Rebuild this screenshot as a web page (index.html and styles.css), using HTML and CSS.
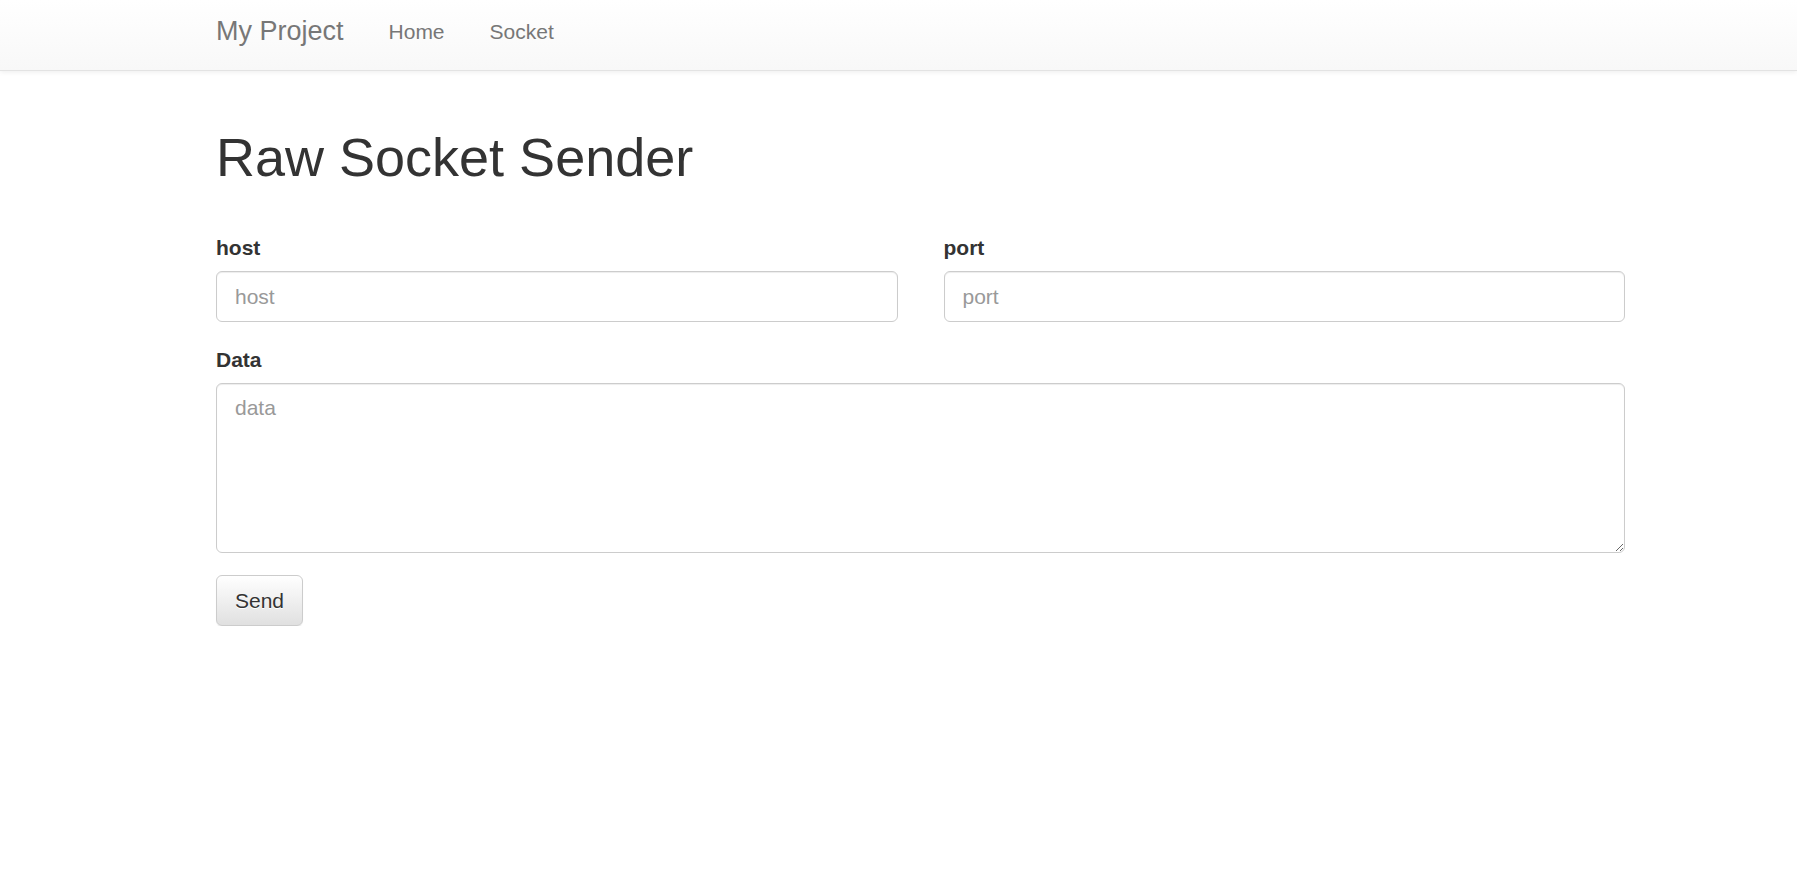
FILE: index.html
```html
<!DOCTYPE html>
<html lang="en">
<head>
<meta charset="utf-8">
<title>Raw Socket Sender</title>
<link rel="stylesheet" href="styles.css">
</head>
<body>
<nav class="navbar">
  <div class="navbar-inner">
    <a class="brand" href="#">My Project</a>
    <a class="nav-link" href="#">Home</a>
    <a class="nav-link" href="#">Socket</a>
  </div>
</nav>
<main class="container">
  <h1 class="title">Raw Socket Sender</h1>
  <form class="form">
    <div class="row">
      <div class="form-group">
        <label class="label" for="host">host</label>
        <input class="control" id="host" type="text" placeholder="host">
      </div>
      <div class="form-group">
        <label class="label" for="port">port</label>
        <input class="control" id="port" type="text" placeholder="port">
      </div>
    </div>
    <div class="form-group">
      <label class="label" for="data">Data</label>
      <textarea class="control textarea" id="data" rows="5" placeholder="data"></textarea>
    </div>
    <button class="btn" type="button">Send</button>
  </form>
</main>
</body>
</html>
```
FILE: styles.css
```css
html, body {
  margin: 0;
  padding: 0;
  background: #fff;
}
body {
  font-family: "Liberation Sans", Arial, Helvetica, sans-serif;
  font-size: 21px;
  line-height: 30px;
  color: #333;
}
.navbar {
  height: 70px;
  background: linear-gradient(to bottom, #ffffff 0%, #f8f8f8 100%);
  border-bottom: 1px solid #e3e3e3;
  box-shadow: inset 0 1px 0 rgba(255,255,255,.15), 0 1px 5px rgba(0,0,0,.075);
}
.navbar-inner {
  display: flex;
  align-items: flex-start;
  box-sizing: border-box;
  height: 70px;
  padding-top: 16px;
  margin-left: 216px;
}
.brand {
  font-size: 27px;
  line-height: 30px;
  color: #777;
  text-decoration: none;
  padding-right: 22.5px;
}
.nav-link {
  font-size: 21px;
  line-height: 30px;
  color: #777;
  text-decoration: none;
  padding: 1px 22.5px 0;
}
.container {
  width: 1409px;
  margin-left: 216px;
}
.title {
  font-size: 54px;
  line-height: 59.4px;
  font-weight: normal;
  color: #333;
  margin: 57px 0 46px;
}
.form {
  margin: 0;
}
.row {
  display: grid;
  grid-template-columns: 1fr 1fr;
  column-gap: 46px;
}
.form-group {
  margin-bottom: 22.5px;
}
.label {
  display: block;
  font-weight: bold;
  font-size: 21px;
  line-height: 30px;
  margin-bottom: 8px;
}
.control {
  display: block;
  box-sizing: border-box;
  width: 100%;
  height: 51px;
  padding: 9px 18px;
  font-family: "Liberation Sans", Arial, Helvetica, sans-serif;
  font-size: 21px;
  line-height: 30px;
  color: #555;
  background: #fff;
  border: 1px solid #ccc;
  border-radius: 6px;
  box-shadow: inset 0 1px 1px rgba(0,0,0,.075);
  margin: 0;
}
.control::placeholder {
  color: #999;
}
.textarea {
  height: 170px;
  resize: vertical;
}
.btn {
  display: block;
  box-sizing: border-box;
  height: 51px;
  padding: 9px 18px;
  font-family: "Liberation Sans", Arial, Helvetica, sans-serif;
  font-size: 21px;
  line-height: 30px;
  color: #333;
  background: linear-gradient(to bottom, #ffffff 0%, #e0e0e0 100%);
  border: 1px solid #ccc;
  border-radius: 6px;
  text-shadow: 0 1px 0 #fff;
  box-shadow: inset 0 1px 0 rgba(255,255,255,.15), 0 1px 1px rgba(0,0,0,.075);
  margin-top: 1px;
  cursor: pointer;
}
```
